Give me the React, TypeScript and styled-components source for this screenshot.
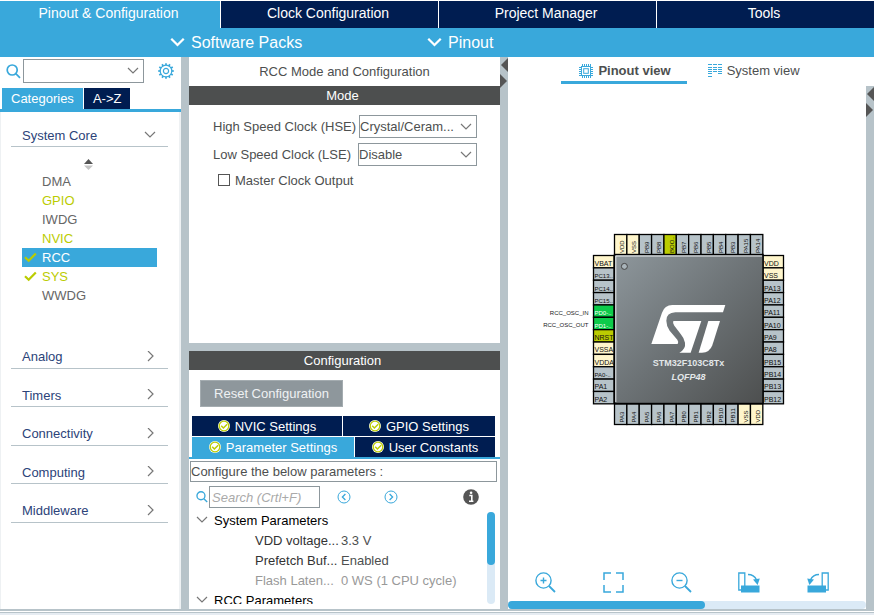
import React from "react";
import styled, { createGlobalStyle } from "styled-components";

const blue = "#39a8db";
const navy = "#001d51";
const steel = "#b7c3c9";
const lime = "#bbcc01";
const ink = "#4d4f4f";
const pale = "#dbeaf6";

const GlobalStyle = createGlobalStyle`
  * { box-sizing: border-box; }
  body { margin: 0; background: #fff; }
  body, button, input, select {
    font-family: "Liberation Sans", Arial, sans-serif;
    font-size: 13px;
    color: ${ink};
  }
  button { border: 0; padding: 0; background: none; cursor: pointer; }
  ul { list-style: none; margin: 0; padding: 0; }
  h2, h3 { margin: 0; font-weight: 400; font-size: 13px; }
  svg { display: block; flex: none; }
`;

const Page = styled.div`
  display: flex;
  flex-direction: column;
  min-height: 100vh;
  padding-top: 1px;
`;

const MainTabs = styled.nav`
  display: grid;
  grid-template-columns: 220fr 217fr 217fr 217fr;
  column-gap: 1px;
  background: #fff;
`;

const MainTab = styled.button<{ $active?: boolean }>`
  height: 27px;
  padding: 0 3px 3px 0;
  font-size: 14px;
  color: #fff;
  background: ${(p) => (p.$active ? blue : navy)};
`;

const SubBar = styled.div`
  display: grid;
  grid-template-columns: 170fr 257fr 447fr;
  height: 29px;
  background: ${blue};
`;

const SubMenu = styled.button<{ $column: number }>`
  grid-column: ${(p) => p.$column};
  justify-self: start;
  display: flex;
  align-items: center;
  gap: 6px;
  font-size: 16px;
  color: #fff;
`;

const Workspace = styled.main`
  flex: 1;
  display: flex;
`;

const Splitter = styled.div`
  flex: none;
  width: 8px;
  background: ${steel};
`;

const SplitterButton = styled.button`
  display: block;
  width: 8px;
  height: 16px;
`;

const Sidebar = styled.aside`
  flex: none;
  width: 181px;
  display: flex;
  flex-direction: column;
`;

const SearchRow = styled.div`
  display: flex;
  align-items: center;
  gap: 2px;
  padding: 2px 7px 0 6px;
  height: 26px;
`;

const SelectBox = styled.span<{ $width: number }>`
  display: grid;
  align-items: center;
  width: ${(p) => p.$width}px;
  svg, select { grid-area: 1 / 1; }
  svg { justify-self: end; margin-right: 5px; pointer-events: none; }
`;

const SelectInput = styled.select<{ $tall?: boolean }>`
  appearance: none;
  width: 100%;
  height: ${(p) => (p.$tall ? 24 : 23)}px;
  padding: 0;
  border: 1px solid #8d979c;
  border-radius: 0;
  background: #fff;
`;

const GearButton = styled.button`
  margin-left: auto;
`;

const CategoryTabs = styled.div`
  display: flex;
  gap: 1px;
  margin-top: 5px;
  padding-left: 2px;
  border-bottom: 3px solid ${blue};
`;

const CategoryTab = styled.button<{ $active?: boolean }>`
  height: 21px;
  padding: 0 9px;
  color: #fff;
  background: ${(p) => (p.$active ? blue : navy)};
`;

const CategoryPanel = styled.div`
  flex: 1;
  border-left: 1px solid #eef1f3;
  border-right: 2px solid #eef1f3;
  padding: 12px 10px 0;
`;

const Category = styled.button`
  display: flex;
  align-items: center;
  justify-content: space-between;
  width: 157px;
  height: 23px;
  padding: 0 12px 0 11px;
  border-bottom: 1px solid ${steel};
  color: #2c4379;
`;

const CategoryStack = styled.div`
  display: grid;
  grid-auto-rows: 1fr;
  align-items: end;
  height: 193px;
  margin-top: 25px;
`;

const SortButton = styled.button`
  display: block;
  margin: 12px 0 2px 73px;
`;

const ModuleItem = styled.li<{ $selected?: boolean }>`
  display: flex;
  align-items: center;
  width: 135px;
  margin-left: 11px;
  background: ${(p) => (p.$selected ? blue : "transparent")};
`;

const ModuleButton = styled.button<{ $tone: string }>`
  display: grid;
  grid-template-columns: 18px 1fr;
  align-items: center;
  justify-items: start;
  width: 100%;
  height: 19px;
  padding-left: 2px;
  color: ${(p) => p.$tone};
`;

const Middle = styled.section`
  flex: none;
  width: 311px;
  display: flex;
  flex-direction: column;
`;

const PanelTitle = styled.h2`
  height: 29px;
  line-height: 29px;
  text-align: center;
`;

const PanelBar = styled.h3`
  height: 19px;
  line-height: 19px;
  padding-right: 4px;
  text-align: center;
  color: #fff;
  background: ${ink};
`;

const ModeForm = styled.form`
  display: flex;
  flex-direction: column;
  gap: 5px;
  height: 238px;
  padding: 10px 23px 0 24px;
`;

const Field = styled.label`
  display: flex;
  align-items: center;
  justify-content: space-between;
`;

const CheckField = styled.label`
  display: flex;
  align-items: center;
  gap: 5px;
  height: 18px;
  padding-left: 5px;
`;

const CheckBox = styled.input`
  appearance: none;
  width: 12px;
  height: 12px;
  margin: 0;
  border: 1px solid #555;
  background: #fff;
`;

const HorizontalSplitter = styled.div`
  height: 8px;
  background: ${steel};
`;

const ResetButton = styled.button`
  align-self: flex-start;
  margin: 10px 0 9px 11px;
  height: 27px;
  width: 143px;
  color: #eef1f3;
  background: #8e979c;
  border: 1px solid #a4acb0;
`;

const SettingsTabs = styled.div`
  display: grid;
  gap: 1px;
  padding: 0 5px 0 3px;
  border-bottom: 2px solid ${blue};
`;

const SettingsRow = styled.div<{ $columns: string }>`
  display: grid;
  grid-template-columns: ${(p) => p.$columns};
  gap: 1px;
`;

const SettingsTab = styled.button<{ $active?: boolean }>`
  display: flex;
  align-items: center;
  justify-content: center;
  gap: 5px;
  height: 20px;
  color: #fff;
  background: ${(p) => (p.$active ? blue : navy)};
`;

const Hint = styled.p`
  margin: 2px 3px 0 1px;
  height: 21px;
  line-height: 19px;
  border: 1px solid #8d979c;
`;

const ParameterTools = styled.div`
  display: flex;
  align-items: center;
  height: 22px;
  margin: 4px 21px 0 7px;
`;

const ParameterSearch = styled.input`
  width: 111px;
  height: 22px;
  margin: 0 17px 0 1px;
  padding: 0 2px;
  border: 1px solid #8d979c;
  font-style: italic;
  &::placeholder { color: #aaa; }
`;

const StepButton = styled.button`
  margin-right: 33px;
`;

const InfoButton = styled.button`
  margin-left: auto;
`;

const ParameterArea = styled.div`
  display: flex;
  justify-content: space-between;
  height: 94px;
  margin: 2px 5px 0 7px;
  overflow: hidden;
`;

const ParameterTable = styled.table`
  border-collapse: collapse;
  align-self: flex-start;
  td, th {
    height: 20px;
    padding: 0;
    font-weight: 400;
    text-align: left;
    white-space: nowrap;
  }
`;

const GroupToggle = styled.button`
  display: flex;
  align-items: center;
  gap: 6px;
  color: #000;
`;

const ParameterName = styled.th<{ $muted?: boolean }>`
  && { width: 145px; padding-left: 59px; }
  color: ${(p) => (p.$muted ? "#999" : "#333")};
`;

const ParameterValue = styled.td<{ $muted?: boolean }>`
  color: ${(p) => (p.$muted ? "#999" : ink)};
`;

const VerticalTrack = styled.div`
  width: 8px;
  height: 92px;
  margin-top: 2px;
  border-radius: 4px;
  background: ${pale};
`;

const VerticalThumb = styled.div`
  height: 53px;
  border-radius: 4px;
  background: ${blue};
`;

const PinoutPane = styled.section`
  flex: 1;
  min-width: 0;
  display: flex;
  flex-direction: column;
`;

const ViewTabs = styled.div`
  display: flex;
  justify-content: center;
  gap: 19px;
  height: 29px;
  padding-right: 20px;
`;

const ViewTab = styled.button<{ $active?: boolean }>`
  display: flex;
  align-items: center;
  gap: 5px;
  height: 27px;
  padding: 3px ${(p) => (p.$active ? 16 : 1)}px 0 ${(p) => (p.$active ? 18 : 2)}px;
  font-weight: ${(p) => (p.$active ? 700 : 400)};
  border-bottom: 3px solid ${(p) => (p.$active ? blue : "transparent")};
`;

const PaneRow = styled.div`
  flex: 1;
  display: flex;
`;

const PinoutColumn = styled.div`
  flex: 1;
  min-width: 0;
  display: flex;
  flex-direction: column;
`;

const ChipCanvas = styled.div`
  flex: 1;
  display: flex;
  align-items: center;
  justify-content: center;
  padding-top: 10px;
`;

const ZoomTools = styled.div`
  display: flex;
  justify-content: space-between;
  align-items: center;
  height: 38px;
  padding: 0 37px 0 27px;
`;

const Track = styled.div`
  height: 8px;
  border-radius: 4px;
  background: ${pale};
`;

const Thumb = styled.div`
  width: 55%;
  height: 8px;
  border-radius: 4px;
  background: ${blue};
`;

const Footer = styled.footer`
  height: 6px;
  border-top: 2px solid ${steel};
  border-bottom: 2px solid #e6ecf2;
  box-shadow: inset 0 -1px 0 ${steel};
`;

const Chevron = ({ w = 12, color = "#777", width = 1.2, dir = "down" }: { w?: number; color?: string; width?: number; dir?: "down" | "right" }) => (
  <svg width={w} height={w} viewBox="0 0 12 12" fill="none" stroke={color} strokeWidth={width}>
    <path d={dir === "down" ? "M1 3L6 8L11 3" : "M4 0L9 5L4 10"} />
  </svg>
);

const SearchIcon = ({ size }: { size: number }) => (
  <svg width={size} height={size} viewBox="0 0 15 15" fill="none" stroke={blue} strokeWidth="1.7">
    <circle cx="6.2" cy="6" r="5" />
    <path d="M9.8 9.6L14 13.8" />
  </svg>
);

const teeth = Array.from({ length: 12 }, (_, i) => i * 30);

const GearIcon = () => (
  <svg width="16" height="16" viewBox="-8 -8 16 16" fill="none" stroke={blue} strokeWidth="1.2">
    <circle r="5.8" />
    <circle r="2.6" />
    {teeth.map((a) => (
      <path key={a} d="M0 -5.8V-7.8" strokeWidth="1.7" transform={`rotate(${a})`} />
    ))}
  </svg>
);

const Tick = () => (
  <svg width="13" height="11" viewBox="0 0 13 11" fill="none" stroke={lime} strokeWidth="2.2">
    <path d="M1 5.2L4.7 8.8L11.8 1.5" />
  </svg>
);

const Badge = () => (
  <svg width="12" height="12" viewBox="0 0 12 12">
    <circle cx="6" cy="6" r="6" fill="#fff" />
    <circle cx="6" cy="6" r="4.8" fill="#fff" stroke={lime} strokeWidth="1.3" />
    <path d="M3.2 5.8L5.4 8L9.2 4.2" fill="none" stroke={lime} strokeWidth="1.5" />
  </svg>
);

const Triangle = ({ dir }: { dir: "left" | "right" }) => (
  <svg width="8" height="16" viewBox="0 0 8 16" fill="#555">
    <path d={dir === "left" ? "M8 1V15L1 8Z" : "M0 1V15L7 8Z"} />
  </svg>
);

const Step = ({ dir }: { dir: "left" | "right" }) => (
  <svg width="14" height="14" viewBox="0 0 14 14" fill="none" stroke={blue}>
    <circle cx="7" cy="7" r="6" />
    <path d={dir === "left" ? "M8.4 4L5.4 7L8.4 10" : "M5.6 4L8.6 7L5.6 10"} strokeWidth="1.3" />
  </svg>
);

const InfoIcon = () => (
  <svg width="16" height="16" viewBox="0 0 16 16">
    <circle cx="8" cy="8" r="7.8" fill="#555" />
    <path d="M6.3 6.5H8.8V12M6 12.3H10.4" stroke="#fff" strokeWidth="1.6" fill="none" />
    <circle cx="8.1" cy="3.8" r="1.3" fill="#fff" />
  </svg>
);

const ChipIcon = () => (
  <svg width="14" height="14" viewBox="0 0 14 14" fill="none" stroke={blue}>
    <rect x="2.5" y="2.5" width="9" height="9" />
    <rect x="4.7" y="4.7" width="4.6" height="4.6" />
    <path d="M3.5 0V2M5.5 0V2M7.5 0V2M9.5 0V2M11.5 0V2M3.5 12V14M5.5 12V14M7.5 12V14M9.5 12V14M11.5 12V14M0 3.5H2M0 5.5H2M0 7.5H2M0 9.5H2M0 11.5H2M12 3.5H14M12 5.5H14M12 7.5H14M12 9.5H14M12 11.5H14" />
  </svg>
);

const SystemIcon = () => (
  <svg width="14" height="14" viewBox="0 0 14 14" stroke={blue} strokeWidth="1">
    <path d="M0 .5H4M5 .5H9M10 .5H14M0 3.5H4M5 3.5H9M10 3.5H14M0 5.5H4M5 5.5H9M10 5.5H14M0 7.5H4M5 7.5H9M10 7.5H14M0 9.5H4M10 9.5H14M0 12.5H4" />
  </svg>
);

const Magnifier = ({ plus }: { plus?: boolean }) => (
  <svg width="21" height="21" viewBox="0 0 21 21" fill="none" stroke={blue} strokeWidth="1.4">
    <circle cx="8.5" cy="8.5" r="7.6" />
    <path d="M14 14L20 20" strokeWidth="1.8" />
    <path d={plus ? "M5.5 8.5H11.5M8.5 5.5V11.5" : "M5.5 8.5H11.5"} />
  </svg>
);

const FitIcon = () => (
  <svg width="21" height="21" viewBox="0 0 21 21" fill="none" stroke={blue} strokeWidth="1.5">
    <path d="M1 8V1H8M13 1H20V8M20 13V20H13M8 20H1V13" />
  </svg>
);

const RotateIcon = ({ flip }: { flip?: boolean }) => (
  <svg width="22" height="21" viewBox="0 0 22 21" fill="none" stroke={blue} strokeWidth="1.3">
    <g transform={flip ? "matrix(-1 0 0 1 22 0)" : undefined}>
      <path d="M3 18H.8V1H6.8V14" />
      <path d="M10 2.5Q16 2.5 18.6 8" strokeWidth="1.5" />
      <path d="M15 7.5L21.8 6.5L19.6 13Z" fill={blue} stroke="none" />
      <rect x="3" y="13.5" width="18.5" height="7" fill={blue} stroke="none" />
    </g>
  </svg>
);

const power = "#fff6cc";
const pinColors: Record<string, string> = {
  VBAT: power, VDD: power, VSS: power, VSSA: power, VDDA: power,
  "PD0-..": "#0ccb4a", "PD1-..": "#0ccb4a", NRST: lime, "BOO..": lime,
};
const leftPins = ["VBAT", "PC13..", "PC14..", "PC15..", "PD0-..", "PD1-..", "NRST", "VSSA", "VDDA", "PA0-..", "PA1", "PA2"];
const rightPins = ["VDD", "VSS", "PA13", "PA12", "PA11", "PA10", "PA9", "PA8", "PB15", "PB14", "PB13", "PB12"];
const topPins = ["VDD", "VSS", "PB9", "PB8", "BOO..", "PB7", "PB6", "PB5", "PB4", "PB3", "PA15", "PA14"];
const bottomPins = ["PA3", "PA4", "PA5", "PA6", "PA7", "PB0", "PB1", "PB2", "PB10", "PB11", "VSS", "VDD"];

const pitch = 12.36;

const Pin = ({ name, small }: { name: string; small?: boolean }) => (
  <>
    <rect x="0" y="0" width="20.5" height={pitch} fill={pinColors[name] ?? steel} stroke="#000" strokeWidth="1.3" />
    <text x={small ? 2 : 1} y={small ? 9.6 : 10.4} fontSize={small || name.length > 5 ? 6 : 7} fill={name.startsWith("PD") ? "#fff" : "#111"}>{name}</text>
  </>
);

const Chip = () => (
  <svg width="295" height="200" viewBox="540 230 295 200" fontFamily="Liberation Sans, Arial, sans-serif">
    <defs>
      <linearGradient id="package" x1="0" y1="0" x2="1" y2="1">
        <stop offset="0" stopColor="#8e979c" />
        <stop offset=".5" stopColor="#6c7275" />
        <stop offset="1" stopColor="#4d4f4f" />
      </linearGradient>
    </defs>
    {leftPins.map((n, i) => (
      <g key={n} transform={`translate(593.5 ${255.5 + i * pitch})`}><Pin name={n} /></g>
    ))}
    {rightPins.map((n, i) => (
      <g key={n} transform={`translate(763 ${255.5 + i * pitch})`}><Pin name={n} /></g>
    ))}
    {topPins.map((n, i) => (
      <g key={n} transform={`translate(${614.5 + i * pitch} 255) rotate(-90)`}><Pin name={n} small /></g>
    ))}
    {bottomPins.map((n, i) => (
      <g key={n} transform={`translate(${614.5 + i * pitch} 424.5) rotate(-90)`}><Pin name={n} small /></g>
    ))}
    <rect x="614.5" y="254.5" width="148.5" height="149" fill="url(#package)" stroke="#000" strokeWidth="1.4" />
    <path d="M615.8 402V256H762" fill="none" stroke="#e9edef" />
    <circle cx="624.4" cy="266.4" r="3" fill="#a9b4ba" stroke="#444" />
    <g transform="translate(612 252) scale(.3333)" fill="#fff">
      <path d="M118 276L150 182Q158 159 181 159H340L333 181H190Q163 182 163 206Q163 222 173 236L196 263Q201 270 197 276Z" />
      <path d="M184 207H268L236 302H202Q222 291 219 272Q217 259 206 246L187 221Q181 213 184 207Z" />
      <path d="M289 207H324L301 280Q293 302 270 302H260Z" />
    </g>
    <text x="688.5" y="365.5" fontSize="9" fontWeight="700" textAnchor="middle" fill="#e3e7e9">STM32F103C8Tx</text>
    <text x="688.5" y="379.5" fontSize="9" fontWeight="700" fontStyle="italic" textAnchor="middle" fill="#e3e7e9">LQFP48</text>
    <text x="588.5" y="314.5" fontSize="6" textAnchor="end" fill="#222">RCC_OSC_IN</text>
    <text x="588.5" y="327" fontSize="6" textAnchor="end" fill="#222">RCC_OSC_OUT</text>
  </svg>
);

const modules = [
  { name: "DMA" },
  { name: "GPIO", used: true },
  { name: "IWDG" },
  { name: "NVIC", used: true },
  { name: "RCC", used: true, ticked: true, selected: true },
  { name: "SYS", used: true, ticked: true },
  { name: "WWDG" },
];

const parameters = [
  { name: "VDD voltage...", value: "3.3 V" },
  { name: "Prefetch Buf...", value: "Enabled" },
  { name: "Flash Laten...", value: "0 WS (1 CPU cycle)", muted: true },
];

export default function App() {
  return (
    <Page>
      <GlobalStyle />
      <MainTabs>
        <MainTab $active>Pinout &amp; Configuration</MainTab>
        <MainTab>Clock Configuration</MainTab>
        <MainTab>Project Manager</MainTab>
        <MainTab>Tools</MainTab>
      </MainTabs>
      <SubBar>
        <SubMenu $column={2}><Chevron w={15} color="#fff" width={1.8} />Software Packs</SubMenu>
        <SubMenu $column={3}><Chevron w={15} color="#fff" width={1.8} />Pinout</SubMenu>
      </SubBar>
      <Workspace>
        <Sidebar>
          <SearchRow>
            <SearchIcon size={15} />
            <SelectBox $width={121}>
              <SelectInput $tall aria-label="Search peripherals"><option></option></SelectInput>
              <Chevron />
            </SelectBox>
            <GearButton aria-label="Settings"><GearIcon /></GearButton>
          </SearchRow>
          <CategoryTabs>
            <CategoryTab $active>Categories</CategoryTab>
            <CategoryTab>A-&gt;Z</CategoryTab>
          </CategoryTabs>
          <CategoryPanel>
            <Category>System Core<Chevron /></Category>
            <SortButton aria-label="Sort">
              <svg width="9" height="11" viewBox="0 0 9 11">
                <path d="M0 5L4.5 0L9 5Z" fill="#555" />
                <path d="M0 6.5H9L4.5 11Z" fill="#c4c4c4" />
              </svg>
            </SortButton>
            <ul>
              {modules.map((m) => (
                <ModuleItem key={m.name} $selected={m.selected}>
                  <ModuleButton $tone={m.selected ? "#fff" : m.used ? lime : "#666"}>
                    <span>{m.ticked && <Tick />}</span>
                    {m.name}
                  </ModuleButton>
                </ModuleItem>
              ))}
            </ul>
            <CategoryStack>
              {["Analog", "Timers", "Connectivity", "Computing", "Middleware"].map((c) => (
                <Category key={c}>{c}<Chevron dir="right" /></Category>
              ))}
            </CategoryStack>
          </CategoryPanel>
        </Sidebar>
        <Splitter />
        <Middle>
          <PanelTitle>RCC Mode and Configuration</PanelTitle>
          <PanelBar>Mode</PanelBar>
          <ModeForm>
            <Field>
              High Speed Clock (HSE)
              <SelectBox $width={118}>
                <SelectInput><option>Crystal/Ceram...</option></SelectInput>
                <Chevron />
              </SelectBox>
            </Field>
            <Field>
              Low Speed Clock (LSE)
              <SelectBox $width={119}>
                <SelectInput><option>Disable</option></SelectInput>
                <Chevron />
              </SelectBox>
            </Field>
            <CheckField><CheckBox type="checkbox" />Master Clock Output</CheckField>
          </ModeForm>
          <HorizontalSplitter />
          <PanelBar>Configuration</PanelBar>
          <ResetButton>Reset Configuration</ResetButton>
          <SettingsTabs>
            <SettingsRow $columns="150fr 152fr">
              <SettingsTab><Badge />NVIC Settings</SettingsTab>
              <SettingsTab><Badge />GPIO Settings</SettingsTab>
            </SettingsRow>
            <SettingsRow $columns="162fr 140fr">
              <SettingsTab $active><Badge />Parameter Settings</SettingsTab>
              <SettingsTab><Badge />User Constants</SettingsTab>
            </SettingsRow>
          </SettingsTabs>
          <Hint>Configure the below parameters :</Hint>
          <ParameterTools>
            <SearchIcon size={12} />
            <ParameterSearch aria-label="Search parameters" placeholder="Search (Crtl+F)" />
            <StepButton aria-label="Previous"><Step dir="left" /></StepButton>
            <StepButton aria-label="Next"><Step dir="right" /></StepButton>
            <InfoButton aria-label="Information"><InfoIcon /></InfoButton>
          </ParameterTools>
          <ParameterArea>
            <ParameterTable>
              <tbody>
                <tr><th colSpan={2}><GroupToggle><Chevron />System Parameters</GroupToggle></th></tr>
                {parameters.map((p) => (
                  <tr key={p.name}>
                    <ParameterName $muted={p.muted}>{p.name}</ParameterName>
                    <ParameterValue $muted={p.muted}>{p.value}</ParameterValue>
                  </tr>
                ))}
                <tr><th colSpan={2}><GroupToggle><Chevron />RCC Parameters</GroupToggle></th></tr>
              </tbody>
            </ParameterTable>
            <VerticalTrack><VerticalThumb /></VerticalTrack>
          </ParameterArea>
        </Middle>
        <Splitter>
          <SplitterButton aria-label="Collapse left"><Triangle dir="left" /></SplitterButton>
          <SplitterButton aria-label="Collapse right"><Triangle dir="right" /></SplitterButton>
        </Splitter>
        <PinoutPane>
          <ViewTabs>
            <ViewTab $active><ChipIcon />Pinout view</ViewTab>
            <ViewTab><SystemIcon />System view</ViewTab>
          </ViewTabs>
          <PaneRow>
            <PinoutColumn>
              <ChipCanvas><Chip /></ChipCanvas>
              <ZoomTools>
                <button aria-label="Zoom in"><Magnifier plus /></button>
                <button aria-label="Best fit"><FitIcon /></button>
                <button aria-label="Zoom out"><Magnifier /></button>
                <button aria-label="Rotate clockwise"><RotateIcon /></button>
                <button aria-label="Rotate counter-clockwise"><RotateIcon flip /></button>
              </ZoomTools>
              <Track><Thumb /></Track>
            </PinoutColumn>
            <Splitter>
              <SplitterButton aria-label="Show left"><Triangle dir="left" /></SplitterButton>
              <SplitterButton aria-label="Show right"><Triangle dir="right" /></SplitterButton>
            </Splitter>
          </PaneRow>
        </PinoutPane>
      </Workspace>
      <Footer />
    </Page>
  );
}
